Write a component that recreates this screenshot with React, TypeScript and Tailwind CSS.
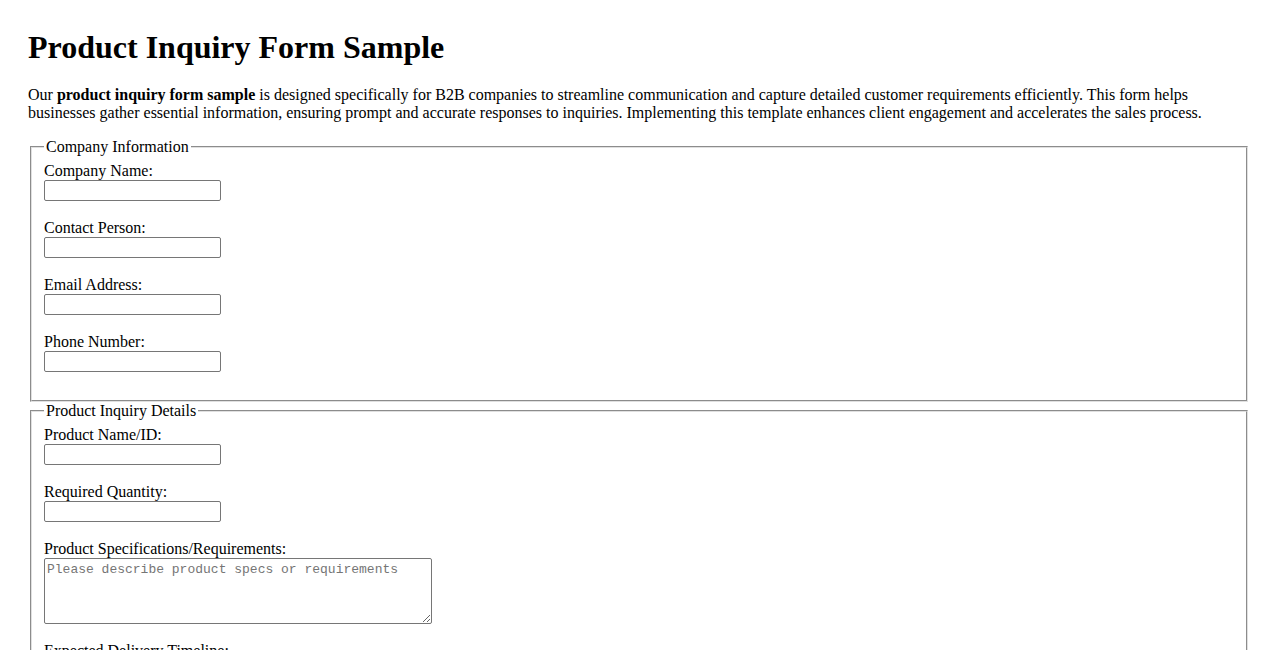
import React from 'react';

const serif = { fontFamily: '"Liberation Serif", "Times New Roman", serif' };

function Field({ label, children }: { label: string; children?: React.ReactNode }) {
  return (
    <div className="mb-[18px]">
      <label className="block leading-[18px] text-[16px]">{label}</label>
      {children ?? (
        <input
          type="text"
          className="block w-[177px] h-[21px] border border-[#767676] rounded-[2px] px-[2px] py-[1px] text-[13px] bg-white"
        />
      )}
    </div>
  );
}

export default function App() {
  return (
    <main className="min-h-screen bg-white text-black px-[28px] pt-[8px] pb-8" style={serif}>
      <h1 className="text-[32px] font-bold leading-[37px] mt-[21px] mb-[20px]">Product Inquiry Form Sample</h1>
      <p className="text-[16px] leading-[18px] mb-[16px]">
        Our <strong>product inquiry form sample</strong> is designed specifically for B2B companies to streamline
        communication and capture detailed customer requirements efficiently. This form helps businesses gather
        essential information, ensuring prompt and accurate responses to inquiries. Implementing this template
        enhances client engagement and accelerates the sales process.
      </p>

      <form>
        {/* Company Information */}
        <fieldset className="mx-[2px] border-2 [border-style:groove] border-[#e0e0e0] px-[12px] pt-[6px] pb-[10px]">
          <legend className="px-[2px] text-[16px] leading-[18px]">Company Information</legend>
          <Field label="Company Name:" />
          <Field label="Contact Person:" />
          <Field label="Email Address:" />
          <Field label="Phone Number:" />
        </fieldset>

        {/* Product Inquiry Details */}
        <fieldset className="mx-[2px] border-2 [border-style:groove] border-[#e0e0e0] px-[12px] pt-[6px] pb-[10px]">
          <legend className="px-[2px] text-[16px] leading-[18px]">Product Inquiry Details</legend>
          <Field label="Product Name/ID:" />
          <Field label="Required Quantity:" />
          <Field label="Product Specifications/Requirements:">
            <textarea
              rows={4}
              placeholder="Please describe product specs or requirements"
              className="block w-[388px] h-[66px] border border-[#767676] rounded-[2px] px-[2px] pt-[3px] pb-[1px] text-[13px] leading-[15px] placeholder:text-[#757575]"
              style={{ fontFamily: '"Liberation Mono", "Courier New", monospace' }}
            />
          </Field>
          <Field label="Expected Delivery Timeline:" />
          <Field label="Additional Comments:" />
        </fieldset>
      </form>
    </main>
  );
}
